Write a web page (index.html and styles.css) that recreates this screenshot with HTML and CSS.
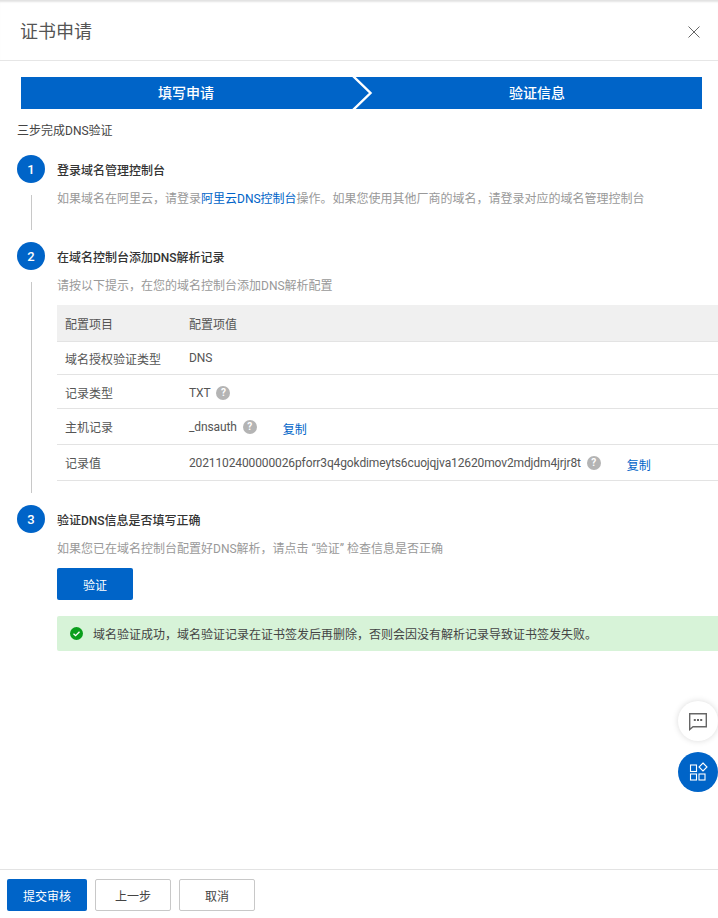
FILE: index.html
```html
<!DOCTYPE html>
<html lang="zh-CN">
<head>
<meta charset="utf-8">
<title>证书申请</title>
<link rel="stylesheet" href="styles.css">
</head>
<body>
<div class="page">
  <header class="head">
    <h1 class="head-title">证书申请</h1>
    <svg class="close" width="14" height="14" viewBox="0 0 14 14"><path d="M1.500 1.500l11 11M12.500 1.500l-11 11" stroke="#666" stroke-width="1" fill="none"/></svg>
  </header>
  <main class="body">
    <div class="wizard">
      <div class="wizard-step">填写申请</div>
      <div class="wizard-step">验证信息</div>
      <svg class="chevron" width="24" height="32" viewBox="0 0 24 32"><path d="M1 -1L18.500 16L1 33" stroke="#fff" stroke-width="2.400" fill="none"/></svg>
    </div>
    <p class="intro">三步完成DNS验证</p>
    <section class="step step-a">
      <div class="rail"><span class="num">1</span><span class="line"></span></div>
      <div class="content">
        <h2 class="step-title">登录域名管理控制台</h2>
        <p class="desc">如果域名在阿里云，请登录<a class="link">阿里云DNS控制台</a>操作。如果您使用其他厂商的域名，请登录对应的域名管理控制台</p>
      </div>
    </section>
    <section class="step step-b">
      <div class="rail"><span class="num">2</span><span class="line"></span></div>
      <div class="content">
        <h2 class="step-title">在域名控制台添加DNS解析记录</h2>
        <p class="desc">请按以下提示，在您的域名控制台添加DNS解析配置</p>
        <div class="table">
          <div class="row row-head"><span class="c1">配置项目</span><span class="c2">配置项值</span></div>
          <div class="row row-33"><span class="c1">域名授权验证类型</span><span class="c2"><span class="val">DNS</span></span></div>
          <div class="row row-34"><span class="c1">记录类型</span><span class="c2"><span class="val">TXT</span><i class="q">?</i></span></div>
          <div class="row row-36"><span class="c1">主机记录</span><span class="c2"><span class="val">_dnsauth</span><i class="q">?</i><a class="link copy">复制</a></span></div>
          <div class="row row-36"><span class="c1">记录值</span><span class="c2"><span class="val">2021102400000026pforr3q4gokdimeyts6cuojqjva12620mov2mdjdm4jrjr8t</span><i class="q">?</i><a class="link copy">复制</a></span></div>
        </div>
      </div>
    </section>
    <section class="step">
      <div class="rail"><span class="num">3</span></div>
      <div class="content">
        <h2 class="step-title">验证DNS信息是否填写正确</h2>
        <p class="desc">如果您已在域名控制台配置好DNS解析，请点击 “验证” 检查信息是否正确</p>
        <button class="btn btn-primary btn-verify">验证</button>
        <div class="alert">
          <svg class="alert-icon" width="13" height="13" viewBox="0 0 13 13"><circle cx="6.500" cy="6.500" r="6.500" fill="#0a9e1c"/><path d="M3.500 6.700l2.100 2 3.900-3.900" stroke="#fff" stroke-width="1.300" fill="none"/></svg>
          <span>域名验证成功，域名验证记录在证书签发后再删除，否则会因没有解析记录导致证书签发失败。</span>
        </div>
      </div>
    </section>
  </main>
  <footer class="foot">
    <button class="btn btn-primary btn-submit">提交审核</button>
    <button class="btn btn-default btn-prev">上一步</button>
    <button class="btn btn-default btn-prev">取消</button>
  </footer>
  <div class="float float-chat">
    <svg width="20" height="20" viewBox="0 0 20 20"><path d="M1.700 2.700h16.600v13H5L1.700 18.500z" stroke="#666" stroke-width="1.400" fill="none"/><path d="M5.800 9h2M9 9h2M12.200 9h2" stroke="#666" stroke-width="1.800" fill="none"/></svg>
  </div>
  <div class="float float-apps">
    <svg width="20" height="20" viewBox="0 0 20 20"><g stroke="#fff" stroke-width="1.100" fill="none"><rect x="2.500" y="3" width="6" height="6.500"/><rect x="2.500" y="12" width="6" height="6"/><rect x="11" y="12" width="6" height="6"/><path d="M15 1l4 4-4 4-4-4z"/></g></svg>
  </div>
</div>
</body>
</html>
```
FILE: styles.css
```css
* { box-sizing: border-box; }
html, body { margin: 0; padding: 0; }
body {
  background: #fff;
  color: #333;
  font-family: Roboto, "Noto Sans CJK SC", sans-serif;
  font-size: 12px;
  overflow: hidden;
}
.page {
  position: relative;
  width: 718px;
  height: 918px;
  display: flex;
  flex-direction: column;
  overflow: hidden;
}
.head {
  height: 61px;
  flex: none;
  display: flex;
  align-items: center;
  justify-content: space-between;
  padding: 2px 17px 0 20px;
  border-bottom: 1px solid #e6e6e6;
  border-top: 1px solid #e3e3e3;
  box-shadow: inset 0 2px 2px -1px #e4e4e4;
}
.head-title {
  margin: 0;
  font-size: 18px;
  font-weight: 400;
  color: #555;
  line-height: 24px;
}
.close { display: block; }
.body {
  flex: 1;
  padding: 16px 0 0 17px;
}
.wizard {
  position: relative;
  display: flex;
  justify-content: space-between;
  width: 681px;
  height: 32px;
  margin-left: 4px;
  background: #0064c8;
}
.wizard-step {
  width: 330px;
  text-align: center;
  line-height: 32px;
  color: #fff;
  font-size: 14px;
  font-weight: 500;
}
.chevron {
  position: absolute;
  left: 331px;
  top: 0;
}
.intro {
  margin: 14px 0 0;
  line-height: 16px;
  color: #444;
}
.step {
  display: flex;
  gap: 12px;
}
.step-a { height: 87px; margin-top: 16px; }
.step-b { height: 263px; }
.rail {
  width: 28px;
  flex: none;
  display: flex;
  flex-direction: column;
  align-items: center;
}
.num {
  width: 28px;
  height: 28px;
  flex: none;
  border-radius: 50%;
  background: #0064c8;
  color: #fff;
  text-align: center;
  line-height: 29px;
  font-size: 13px;
  font-weight: 500;
}
.line {
  flex: 1;
  width: 1px;
  margin: 12px 0;
  background: #c8c8c8;
}
.content { flex: 1; min-width: 0; }
.step-title {
  margin: 7px 0 0;
  font-size: 12px;
  font-weight: 500;
  line-height: 18px;
  color: #333;
}
.desc {
  margin: 10px 0 0;
  line-height: 18px;
  color: #999;
  white-space: nowrap;
}
.link { color: #0064c8; text-decoration: none; }
.table { margin-top: 10px; }
.row {
  display: flex;
  align-items: center;
  border-bottom: 1px solid #e3e3e3;
  color: #555;
  white-space: nowrap;
}
.row-head { height: 37px; background: #f0f0f0; }
.row-33 { height: 33px; }
.row-34 { height: 34px; padding-top: 2px; }
.row-36 { height: 36px; }
.c1 { width: 132px; padding-left: 8px; flex: none; }
.c2 { display: flex; align-items: center; }
.val { letter-spacing: -0.12px; }
.q {
  width: 14px;
  height: 14px;
  margin-left: 6px;
  border-radius: 50%;
  background: #b4b4b4;
  color: #fff;
  font-style: normal;
  font-size: 10px;
  font-weight: 700;
  line-height: 14px;
  text-align: center;
}
.copy { margin-left: 26px; padding-top: 4px; }
.btn {
  display: block;
  height: 32px;
  padding: 0;
  border-radius: 2px;
  font-family: inherit;
  font-size: 12px;
}
.btn-primary {
  border: 0;
  background: #0064c8;
  color: #fff;
}
.btn-default {
  border: 1px solid #c8c8c8;
  background: #fff;
  color: #444;
}
.btn-verify { width: 76px; margin-top: 10px; }
.alert {
  display: flex;
  align-items: center;
  gap: 10px;
  height: 35px;
  margin-top: 16px;
  padding-left: 13px;
  background: #d7f3d8;
  color: #444;
  border-radius: 2px 0 0 2px;
  white-space: nowrap;
}
.foot {
  flex: none;
  height: 49px;
  display: flex;
  gap: 8px;
  padding: 9px 0 0 7px;
  border-top: 1px solid #e3e3e3;
}
.btn-submit { width: 80px; }
.btn-prev { width: 76px; }
.float {
  position: absolute;
  left: 678px;
  width: 40px;
  height: 40px;
  border-radius: 50%;
  display: flex;
  align-items: center;
  justify-content: center;
}
.float-chat {
  top: 701px;
  background: #fff;
  box-shadow: 0 0 6px rgba(0,0,0,.15);
}
.float-apps {
  top: 752px;
  background: #0064c8;
}
```
